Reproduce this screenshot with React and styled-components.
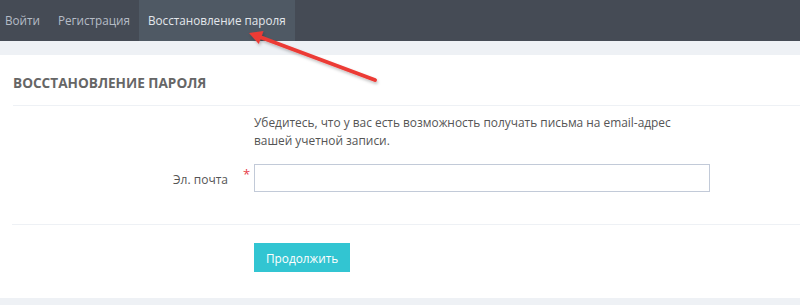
import React from "react";
import styled, { createGlobalStyle } from "styled-components";

const Global = createGlobalStyle`
  html, body { margin: 0; padding: 0; background: #eef1f5; }
  body { font-family: "Open Sans", "Noto Sans", sans-serif; width: 800px; height: 305px; overflow: hidden; }
  * { box-sizing: border-box; }
`;

const Page = styled.div`
  position: relative;
  width: 800px;
  height: 305px;
  background: #eef1f5;
`;

const Nav = styled.nav`
  height: 41px;
  background: #454b55;
  display: flex;
`;

const Tabs = styled.ul`
  display: flex;
  list-style: none;
  margin: 0 0 0 -4px;
  padding: 0;
`;

const Tab = styled.li`
  padding: 0 9px;
  line-height: 41px;
  font-size: 11.7px;
  color: ${(p) => (p.$active ? "#e3e7ec" : "#b5bcc6")};
  background: ${(p) => (p.$active ? "#4f5964" : "transparent")};
`;

const Card = styled.section`
  margin-top: 14px;
  background: #fff;
  height: 243px;
  padding-left: 13px;
`;

const CardHead = styled.div`
  height: 51px;
  padding-top: 5px;
  display: flex;
  align-items: center;
  border-bottom: 1px solid #eef1f5;
`;

const Title = styled.h2`
  margin: 0;
  font-size: 13.6px;
  font-weight: 700;
  color: #666;
`;

const FormBody = styled.div`
  display: grid;
  grid-template-columns: 217px 25px 456px;
  row-gap: 15px;
  padding: 7px 0 32px;
  border-bottom: 1px solid #eef1f5;
  margin-left: -1px;
`;

const Help = styled.p`
  grid-column: 3;
  margin: 0;
  font-size: 11.9px;
  line-height: 18px;
  color: #555;
`;

const Label = styled.label`
  font-size: 12px;
  color: #555;
  text-align: right;
  align-self: center;
  padding-top: 3px;
  padding-right: 1px;
`;

const Star = styled.span`
  color: #e73d4a;
  font-size: 13px;
  line-height: 1;
  padding-left: 14px;
  padding-top: 4px;
`;

const Input = styled.input`
  width: 456px;
  height: 28px;
  border: 1px solid #c2cad8;
  background: #fff;
  outline: none;
  padding: 0 10px;
`;

const Actions = styled.div`
  padding: 18px 0 0 241px;
`;

const Button = styled.button`
  height: 29px;
  padding: 0 11px;
  border: 1px solid #32c5d2;
  background: #32c5d2;
  color: #fff;
  font-family: "Open Sans", "Noto Sans", sans-serif;
  font-size: 11.8px;
  cursor: pointer;
`;

const Arrow = styled.svg`
  position: absolute;
  left: 0;
  top: 0;
  pointer-events: none;
`;

export default function App() {
  return (
    <Page>
      <Global />
      <Nav>
        <Tabs>
          <Tab>Войти</Tab>
          <Tab>Регистрация</Tab>
          <Tab $active>Восстановление пароля</Tab>
        </Tabs>
      </Nav>
      <Card>
        <CardHead>
          <Title>ВОССТАНОВЛЕНИЕ ПАРОЛЯ</Title>
        </CardHead>
        <FormBody>
          <Help>
            Убедитесь, что у вас есть возможность получать письма на email-адрес
            <br />
            вашей учетной записи.
          </Help>
          <Label>Эл. почта</Label>
          <Star>*</Star>
          <Input type="email" />
        </FormBody>
        <Actions>
          <Button>Продолжить</Button>
        </Actions>
      </Card>
      <Arrow width="800" height="305" viewBox="0 0 800 305">
        <defs>
          <filter id="sh" x="-20%" y="-20%" width="140%" height="140%">
            <feDropShadow dx="1" dy="2" stdDeviation="1.5" floodColor="#000" floodOpacity="0.25" />
          </filter>
        </defs>
        <g filter="url(#sh)">
          <line x1="375" y1="80" x2="260" y2="37" stroke="#ec3b36" strokeWidth="4" strokeLinecap="round" />
          <polygon points="249,33 263.5,31 258.8,44" fill="#ec3b36" />
        </g>
      </Arrow>
    </Page>
  );
}
